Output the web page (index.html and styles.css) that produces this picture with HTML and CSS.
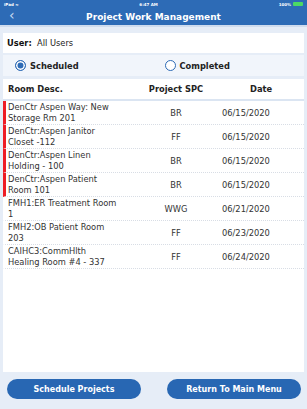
FILE: index.html
```html
<!DOCTYPE html>
<html lang="en">
<head>
  <meta charset="UTF-8" />
  <meta name="viewport" content="width=device-width, initial-scale=1.0" />
  <title>Project Work Management</title>
  <link rel="stylesheet" href="styles.css">
</head>
<body>

<!-- Top bar -->
<div class="topbar">
  <div class="statusbar">
    <span class="carrier">iPad &#8776;</span>
    <span class="clock">6:47 AM</span>
    <span class="battery">100% <i class="batt"></i></span>
  </div>
  <div class="navbar">
    <span class="back">&lsaquo;</span>
    <span class="title">Project Work Management</span>
  </div>
</div>

<div class="content">
  <div class="user-box">
    <b>User:</b>&nbsp; All Users
  </div>

  <div class="radio-row">
    <label class="radio checked"><span class="dot"></span>Scheduled</label>
    <label class="radio"><span class="dot"></span>Completed</label>
  </div>

  <div class="table">
    <div class="row head">
      <div class="c-desc">Room Desc.</div>
      <div class="c-spc">Project SPC</div>
      <div class="c-date">Date</div>
    </div>
    <div class="row flagged">
      <div class="c-desc">DenCtr Aspen Way: New Storage Rm 201</div>
      <div class="c-spc">BR</div>
      <div class="c-date">06/15/2020</div>
    </div>
    <div class="row flagged">
      <div class="c-desc">DenCtr:Aspen Janitor Closet -112</div>
      <div class="c-spc">FF</div>
      <div class="c-date">06/15/2020</div>
    </div>
    <div class="row flagged">
      <div class="c-desc">DenCtr:Aspen Linen Holding - 100</div>
      <div class="c-spc">BR</div>
      <div class="c-date">06/15/2020</div>
    </div>
    <div class="row flagged">
      <div class="c-desc">DenCtr:Aspen Patient Room 101</div>
      <div class="c-spc">BR</div>
      <div class="c-date">06/15/2020</div>
    </div>
    <div class="row">
      <div class="c-desc">FMH1:ER Treatment Room 1</div>
      <div class="c-spc">WWG</div>
      <div class="c-date">06/21/2020</div>
    </div>
    <div class="row">
      <div class="c-desc">FMH2:OB Patient Room 203</div>
      <div class="c-spc">FF</div>
      <div class="c-date">06/23/2020</div>
    </div>
    <div class="row">
      <div class="c-desc">CAIHC3:CommHlth Healing Room #4 - 337</div>
      <div class="c-spc">FF</div>
      <div class="c-date">06/24/2020</div>
    </div>
  </div>

  <div class="buttons">
    <button>Schedule Projects</button>
    <button>Return To Main Menu</button>
  </div>
</div>

</body>
</html>
```

FILE: styles.css
```css
* { margin: 0; padding: 0; box-sizing: border-box; }
body {
  width: 307px;
  height: 409px;
  background: #e6edf7;
  font-family: 'DejaVu Sans', 'Noto Sans', sans-serif;
  color: #333;
  font-size: 8.3px;
  overflow: hidden;
}

/* top bar */
.topbar {
  background: #2d6bb6;
  color: white;
  border-bottom: 2px solid #cfdcee;
}
.statusbar {
  height: 8px;
  display: flex;
  justify-content: space-between;
  align-items: center;
  padding: 0 4px;
  font-size: 4px;
  font-weight: bold;
}
.battery { display: flex; align-items: center; gap: 2px; }
.batt {
  display: inline-block;
  width: 10px;
  height: 4px;
  background: #4cd964;
  border-radius: 1px;
}
.navbar {
  height: 17px;
  display: flex;
  align-items: center;
  justify-content: center;
  position: relative;
}
.back {
  position: absolute;
  left: 9px;
  top: 0;
  font-size: 14px;
  line-height: 14px;
  color: #c9dbf2;
}
.title {
  font-size: 9px;
  font-weight: bold;
}

.content {
  padding: 6px 3px 0;
}
.user-box {
  background: white;
  height: 20px;
  display: flex;
  align-items: center;
  padding-left: 4px;
  color: #222;
}
.user-box b { color: #111; }

.radio-row {
  margin-top: 2px;
  height: 21px;
  background: #f1f5fb;
  display: flex;
  align-items: center;
}
.radio {
  width: 50%;
  display: flex;
  align-items: center;
  gap: 4px;
  padding-left: 12px;
  font-weight: bold;
  color: #222;
}
.radio + .radio { padding-left: 11px; }
.dot {
  width: 11px;
  height: 11px;
  border-radius: 50%;
  border: 1px solid #2d6bb6;
  background: white;
}
.checked .dot {
  background: #2d6bb6;
  box-shadow: inset 0 0 0 1.5px white;
}

.table {
  margin-top: 3px;
  background: white;
  height: 293px;
}
.row {
  display: flex;
  align-items: center;
  height: 24px;
  border-bottom: 1px dotted #d8dde5;
  border-left: 3px solid transparent;
}
.row.flagged { border-left-color: #ee1c25; }
.row.head {
  height: 22px;
  border-bottom: 2px solid #dbe5f2;
  border-left: none;
  padding-left: 3px;
  font-weight: bold;
  color: #222;
}
.c-desc {
  width: 132px;
  padding: 0 18px 0 2px;
  line-height: 11px;
}
.c-spc {
  width: 76px;
  text-align: center;
}
.c-date {
  flex: 1;
  padding-left: 8px;
}
.head .c-date { padding-left: 36px; }

.buttons {
  display: flex;
  justify-content: space-between;
  padding: 7px 3px 0 4px;
}
button {
  width: 134px;
  height: 20px;
  border: none;
  border-radius: 10px;
  background: #2867b3;
  color: white;
  font-family: inherit;
  font-size: 8px;
  font-weight: bold;
}
```
